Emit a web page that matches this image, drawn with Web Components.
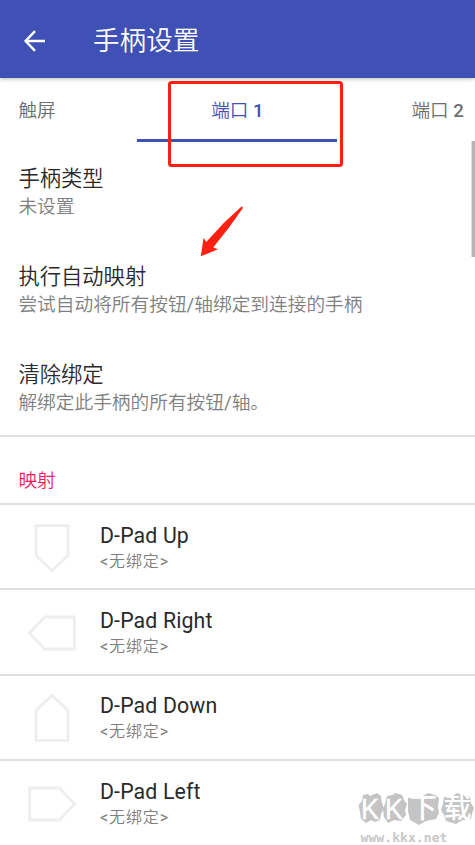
<!DOCTYPE html>
<html lang="zh-CN">
<head>
<meta charset="utf-8">
<title>手柄设置</title>
<style>
html,body{margin:0;height:845px;overflow:hidden;background:#fff}
body{font-family:Roboto,"Noto Sans CJK SC DemiLight","Noto Sans CJK SC",sans-serif;position:relative}
</style>
</head>
<body>
<settings-screen></settings-screen>
<script>
const define = (name, html, setup) => customElements.define(name, class extends HTMLElement {
  connectedCallback() {
    if (this.shadowRoot) return;
    const t = document.createElement('template');
    t.innerHTML = html;
    this.attachShadow({mode: 'open'}).append(t.content.cloneNode(true));
    if (setup) setup(this, this.shadowRoot);
  }
});

define('app-bar', `<style>
:host{display:flex;align-items:center;box-sizing:border-box;height:77.5px;padding:4px 0 0 21px;background:#3f51b5;color:#fff;box-shadow:0 1px 4px rgba(0,0,0,.28);position:relative}
svg{display:block;width:28px;height:28px;margin-right:44px}
h1{margin:0;font-size:26.6px;font-weight:400;line-height:36px;padding-top:1px}
</style>
<svg viewBox="0 0 28 28" fill="none" stroke="#fff" stroke-width="2.4"><path d="M24 14H4.8M14 4.2 4.6 14 14 23.8"/></svg>
<h1><slot></slot></h1>`);

define('tab-item', `<style>
:host{display:flex;flex-direction:column;flex:none;box-sizing:border-box;height:64.5px;font-size:18.6px;line-height:28px;color:#6e6e6e;white-space:nowrap;font-weight:400}
:host([active]){color:#3f51b5}
span{padding-top:19px;flex:1}
i{height:3px;background:transparent}
:host([active]) i{background:#3f51b5}
:host([active]) span{text-align:center}
::slotted(b){font-weight:500}
</style><span><slot></slot></span><i></i>`);

define('tab-strip', `<style>
:host{display:grid;grid-template-columns:119px 200px 52px;column-gap:0;padding-left:18.4px;width:456px;overflow:hidden}
::slotted(:last-child){margin-left:74px}
</style><slot></slot>`);

define('pref-item', `<style>
:host{display:block;box-sizing:border-box;height:97.8px;padding:23px 0 0 18.4px;line-height:28px;white-space:nowrap}
.t{font-size:21.3px;color:#2a2a2a}
.s{font-size:18.7px;color:#808080}
</style><div class="t"><slot name="title"></slot></div><div class="s"><slot></slot></div>`);

define('section-head', `<style>
:host{display:block;box-sizing:border-box;height:67.8px;padding:30px 0 0 18.4px;border-top:2px solid #e0e0e0;font-size:18.6px;line-height:28px;color:#e91e63}
</style><slot></slot>`);

define('pad-icon', `<style>
:host{display:block;width:52px;height:52px}
svg{display:block;width:52px;height:52px;fill:none;stroke:#eee;stroke-width:2.8}
</style><svg viewBox="-26 -26 52 52"><path d="M-16-22.3H16V7.3L0 22.7-16 7.3Z"/></svg>`,
(host, root) => root.querySelector('path').setAttribute('transform', `rotate(${host.getAttribute('turn')})`));

define('binding-row', `<style>
:host{display:flex;box-sizing:border-box;height:85.3px;border-top:2px solid #e0e0e0;padding:16.5px 0 0 26px;white-space:nowrap}
.copy{margin-left:22px}
.t{font-size:21.3px;line-height:28px;color:#2a2a2a;letter-spacing:.14px}
.s{font-size:16px;line-height:24px;color:#808080;letter-spacing:.9px}
</style><pad-icon></pad-icon><div class="copy"><div class="t"><slot></slot></div><div class="s">&lt;无绑定&gt;</div></div>`,
(host, root) => {
  const old = root.querySelector('pad-icon');
  const icon = document.createElement('pad-icon');
  icon.setAttribute('turn', host.getAttribute('turn'));
  old.replaceWith(icon);
});

define('scroll-thumb', `<style>
:host{position:absolute;right:0;top:141px;width:3px;height:116px;background:#b5b5b5;border-left:1px solid #dedede}
</style>`);

define('red-notes', `<style>
:host{position:absolute;left:0;top:0;width:475px;height:300px;pointer-events:none}
svg{display:block}
</style><svg width="475" height="300" viewBox="0 0 475 300">
<rect x="169.5" y="82.5" width="172" height="83" rx="2" fill="none" stroke="#ff2012" stroke-width="3"/>
<path d="M242.2 206.6 241 207 224 222.8 206.2 242 203.6 237.8 200.8 256.3 218 249.2 213.2 247.6 229 227.6 242.9 208Z" fill="#ff2012"/></svg>`);

define('site-mark', `<style>
:host{position:absolute;left:357px;top:785px;width:118px;height:60px}
svg{display:block;overflow:visible}
.k{font:400 30px "Liberation Sans","Noto Sans CJK SC",sans-serif;fill:#fff;stroke:#fff;stroke-width:.4}
.h{font:500 28px "Noto Sans CJK SC",sans-serif;fill:#fff}
.u{font:700 12px "DejaVu Sans Mono","Noto Sans CJK SC",monospace;fill:#c8c8c8}
</style><svg width="118" height="60" viewBox="357 785 118 60">
<g fill="#c4c4c4">
<path d="M363 795 368 794 370 796 377 793 381 796 382 803 384 808 381 814 380 820 375 822 371 820 366 823 361 819 360 812 358.5 805 362 801Z"/>
<path d="M387 796 393 795 395 793 402 795 404 800 407 804 405 810 406 815 401 821 394 820 388 823 384 817 383 809 385 804Z"/>
<path d="M408 798 416 796 421 797 428 793 435 795 439 798 438 807 439 813 436 819 426 821 419 825 410 820 408 811Z"/>
<path d="M444 797 451 797 457 793 464 795 470 797 471 803 474 808 472 814 471 819 463 820 456 824 446 821 444 815 441 810 443 804Z"/>
</g>
<text class="k" x="361" y="819" textLength="18" lengthAdjust="spacingAndGlyphs">K</text>
<text class="k" x="385" y="819" textLength="18" lengthAdjust="spacingAndGlyphs">K</text>
<text class="h" x="409" y="818">下</text>
<text class="h" x="443.5" y="818">载</text>
<text class="u" x="360.5" y="842" textLength="87" lengthAdjust="spacingAndGlyphs">www.kkx.net</text>
</svg>`);

define('settings-screen', `<style>
:host{display:flex;flex-direction:column;height:845px;overflow:hidden;background:#fff}
:host>*{flex:none}
</style>
<app-bar>手柄设置</app-bar>
<tab-strip><tab-item>触屏</tab-item><tab-item active>端口 <b>1</b></tab-item><tab-item>端口 <b>2</b></tab-item></tab-strip>
<pref-item><span slot="title">手柄类型</span>未设置</pref-item>
<pref-item><span slot="title">执行自动映射</span>尝试自动将所有按钮/轴绑定到连接的手柄</pref-item>
<pref-item><span slot="title">清除绑定</span>解绑定此手柄的所有按钮/轴。</pref-item>
<section-head>映射</section-head>
<binding-row turn="0">D-Pad Up</binding-row>
<binding-row turn="90">D-Pad Right</binding-row>
<binding-row turn="180">D-Pad Down</binding-row>
<binding-row turn="270">D-Pad Left</binding-row>
<scroll-thumb></scroll-thumb>
<red-notes></red-notes>
<site-mark></site-mark>`);
</script>
</body>
</html>
